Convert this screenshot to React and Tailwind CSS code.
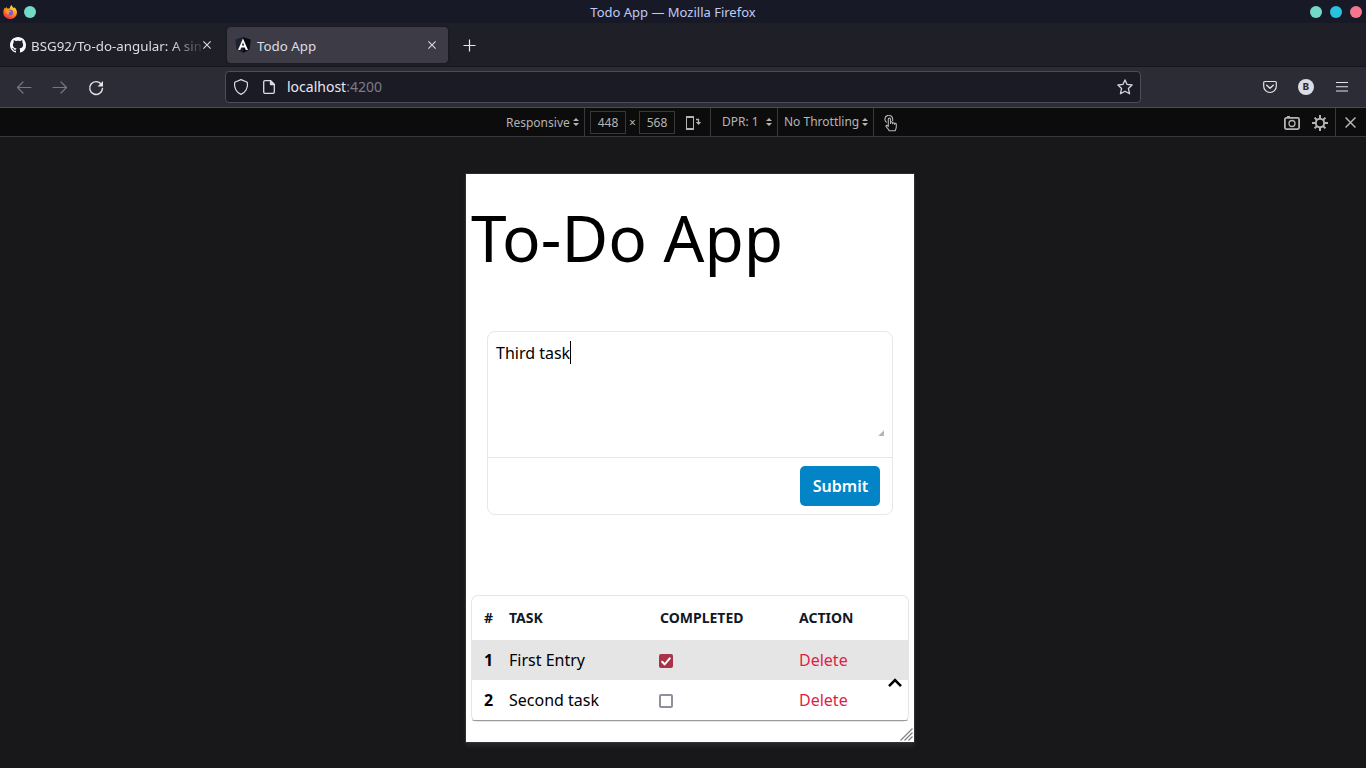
import React from "react";

const SANS = "font-['Noto_Sans',sans-serif]";

function Firefox() {
  return (
    <svg className="h-[14px] w-[14px]" viewBox="0 0 14 14">
      <defs>
        <linearGradient id="fx" x1="0.8" y1="0" x2="0.3" y2="1">
          <stop offset="0" stopColor="#fff34a" />
          <stop offset="0.4" stopColor="#ffa51e" />
          <stop offset="0.75" stopColor="#ff5a28" />
          <stop offset="1" stopColor="#ea2b55" />
        </linearGradient>
      </defs>
      <path
        d="M8.8 0c.2 1.700 1.200 2.300 2 3.200L11.600 2.300C13 3.800 14 5.500 14 7.500A6.700 6.500 0 0 1 7.100 14C3.200 14 .3 11.300.3 7.600.3 5.400 1 3.900 2 2.600l.3 1.100L3.500 2l.7 1.500 2.500.1C7 2 7.500.8 8.800 0Z"
        fill="url(#fx)"
      />
      <circle cx="7.200" cy="7.600" r="2.900" fill="#8057d6" />
      <path d="M3 5.500c1-.9 2.500-.6 3.600.3l1.300.3c-.2.900-1.500 1.100-2 1.600-.5.600-.2 1.300.5 1.700C4.500 10 2.700 8 3 5.500Z" fill="#ff9a20" />
    </svg>
  );
}

function Github() {
  return (
    <svg className="h-4 w-4" viewBox="0 0 16 16" fill="#fbfbfe">
      <path d="M8 0C3.580 0 0 3.580 0 8c0 3.540 2.290 6.530 5.470 7.590.4.070.55-.17.55-.38 0-.19-.01-.82-.01-1.490-2.010.37-2.530-.49-2.690-.94-.09-.23-.48-.94-.82-1.130-.28-.15-.68-.52-.01-.53.63-.01 1.080.58 1.230.82.72 1.210 1.870.87 2.330.66.070-.52.28-.87.51-1.070-1.780-.2-3.640-.89-3.640-3.950 0-.87.31-1.590.82-2.150-.08-.2-.36-1.020.08-2.120 0 0 .67-.21 2.200.82.64-.18 1.320-.27 2-.27s1.360.09 2 .27c1.530-1.040 2.200-.82 2.200-.82.44 1.100.16 1.920.08 2.120.51.56.82 1.270.82 2.150 0 3.070-1.870 3.750-3.650 3.950.29.25.54.73.54 1.480 0 1.070-.01 1.930-.01 2.200 0 .21.15.46.55.38A8.010 8.010 0 0 0 16 8c0-4.420-3.580-8-8-8Z" />
    </svg>
  );
}

function Angular() {
  return (
    <svg className="h-4 w-4" viewBox="0 0 16 16">
      <path d="M8 0 .3 2.600l1.200 10L8 16Z" fill="#1d2230" />
      <path d="m8 0 7.700 2.600-1.200 10L8 16Z" fill="#080b14" />
      <path fillRule="evenodd" d="M8 1.600 3 12.900h2.200l1-2.400h3.600l1 2.400H13Zm0 4 1.200 2.900H6.800Z" fill="#fff" />
    </svg>
  );
}

function Cross({ className, size = 8, width = 1.1 }) {
  return (
    <svg className={className} width={size} height={size} viewBox="0 0 8 8" fill="none" stroke="currentColor" strokeWidth={width}>
      <path d="m.4.4 7.200 7.200M7.600.4.400 7.600" />
    </svg>
  );
}

function Arrow({ className }) {
  return (
    <svg className={className} width="16" height="14" viewBox="0 0 16 14" fill="none" stroke="#777681" strokeWidth="1.200" strokeLinecap="round" strokeLinejoin="round">
      <path d="M1.500 7.500H15M7 2 1.500 7.500 7 13" />
    </svg>
  );
}

function Sorter({ className }) {
  return (
    <svg className={className} width="6" height="8" viewBox="0 0 6 8" fill="#b4b4b6">
      <path d="M0 3 3 0l3 3ZM0 5h6L3 8Z" />
    </svg>
  );
}

function TabBar() {
  return (
    <div className="flex h-[44px] items-center border-b border-[#16161f] bg-[#1f1f28] text-[#dcdce4]">
      <div className="flex h-9 w-[221px] items-center pl-[10px] pr-[9px]">
        <Github />
        <div className="ml-[5px] mt-[2px] w-[170px] overflow-hidden whitespace-nowrap text-[13.333px] leading-5 [mask-image:linear-gradient(to_right,black_140px,transparent_174px)]">
          BSG92/To-do-angular: A simple
        </div>
        <Cross className="ml-[2px] shrink-0" />
      </div>
      <div className="ml-[6px] flex h-9 w-[221px] items-center rounded-[4px] bg-[#3d3c46] pl-2 pr-3 shadow-[0_0_3px_rgba(0,0,0,0.4)]">
        <Angular />
        <span className="ml-[6px] mt-[2px] flex-1 text-[13.333px] leading-5">Todo App</span>
        <Cross />
      </div>
      <svg className="ml-[15px] mt-px" width="13" height="13" viewBox="0 0 13 13" stroke="#e6e6ee" strokeWidth="1.200">
        <path d="M6.500.5v12M.5 6.500h12" />
      </svg>
    </div>
  );
}

function NavBar() {
  return (
    <div className="flex h-[41px] items-center border-b border-[#4b4b55] bg-[#2c2c36]">
      <Arrow className="ml-4" />
      <Arrow className="ml-5 -scale-x-100" />
      <svg className="ml-5 mt-px" width="16" height="16" viewBox="0 0 16 16" fill="none">
        <path d="M13.400 4.400A6.400 6.400 0 1 0 14.500 8.400" stroke="#e2e2ea" strokeWidth="1.400" strokeLinecap="round" />
        <path d="M15 1v5.500H9.500Z" fill="#e2e2ea" />
      </svg>
      <div className="ml-[121px] flex h-8 w-[916px] items-center rounded-[4px] border border-[#4d4d58] bg-[#1b1b26]">
        <svg className="ml-[7px]" width="16" height="18" viewBox="0 0 16 18" fill="none" stroke="#dcdce4" strokeWidth="1.200" strokeLinejoin="round">
          <path d="M8 1.600 14.300 4.200C15.400 10 12.400 14.600 8 16.400 3.600 14.600.6 10 1.700 4.200Z" />
        </svg>
        <svg className="ml-[14px]" width="12" height="14" viewBox="0 0 12 14" fill="none" stroke="#dcdce4" strokeWidth="1.300" strokeLinejoin="round">
          <path d="M2 .7h5.500l3.800 3.800V12a1.300 1.300 0 0 1-1.300 1.300H2A1.300 1.300 0 0 1 .7 12V2A1.300 1.300 0 0 1 2 .7Z" />
          <path d="M7.500.7v3.800h3.800Z" fill="#dcdce4" />
        </svg>
        <span className="ml-3 flex-1 text-[14px] leading-5 text-[#e8e8f0]">
          localhost<span className="text-[#7c7b86]">:4200</span>
        </span>
        <svg className="mr-[7px]" width="16" height="16" viewBox="0 0 16 16" fill="none" stroke="#d6d6df" strokeWidth="1.300" strokeLinejoin="round">
          <path d="m8 .9 2.100 4.500 5 .6-3.700 3.400 1.200 5.400L8 12.300l-4.600 2.500 1.200-5.400L.9 6l5-.6Z" />
        </svg>
      </div>
      <svg className="ml-[122px]" width="14" height="14" viewBox="0 0 14 14" fill="none" stroke="#e2e2ea" strokeWidth="1.200" strokeLinecap="round" strokeLinejoin="round">
        <path d="M1.800 1.500h10.400a1.100 1.100 0 0 1 1.100 1.100v3.600a6.300 6.300 0 0 1-12.600 0V2.600a1.100 1.100 0 0 1 1.100-1.100Z" />
        <path d="M3.700 5.300 7 8.300l3.300-3" strokeWidth="1.400" />
      </svg>
      <div className="ml-[21px] flex h-4 w-4 items-center justify-center rounded-full bg-[#dcdce6] font-['Inter',sans-serif] text-[9.500px] font-extrabold leading-none text-[#2c2c36]">
        B
      </div>
      <svg className="ml-[22px]" width="12" height="10" viewBox="0 0 12 10" fill="#e2e2ea">
        <path d="M0 0h12v1.100H0zM0 4.200h12v1.100H0zM0 8.400h12v1.100H0z" />
      </svg>
    </div>
  );
}

function DeviceBar() {
  return (
    <div className="flex h-[29px] items-center border-b border-[#38383d] bg-[#0c0c0d] text-[12px] leading-4 text-[#b4b4b6]">
      <div className="flex h-full w-[585px] items-center border-r border-[#38383d] pl-[506px]">
        <span className="w-[67px] whitespace-nowrap pt-[2px]">Responsive</span>
        <Sorter />
      </div>
      <div className="flex h-full w-[126px] items-center border-r border-[#38383d] pl-[5px]">
        <span className="flex h-[23px] w-9 items-center justify-center border border-[#38383d] pt-[2px]">448</span>
        <span className="w-[13px] pt-[2px] text-center">×</span>
        <span className="flex h-[23px] w-9 items-center justify-center border border-[#38383d] pt-[2px]">568</span>
        <svg className="ml-[11px] mt-px" width="16" height="14" viewBox="0 0 16 14" fill="none" stroke="#b4b4b6">
          <path d="M0 1h8M0 13h8" strokeWidth="2" />
          <path d="M.5 0v14M7.500 0v14" strokeWidth="1" />
          <path d="M10 3.500h2.500V7" strokeWidth="1.300" />
          <path d="M9.800 6h5.400L12.500 9Z" fill="#b4b4b6" stroke="none" />
        </svg>
      </div>
      <div className="flex h-full w-[67px] items-center border-r border-[#38383d] pl-[11px]">
        <span className="w-[44px] whitespace-nowrap">DPR: 1</span>
        <Sorter />
      </div>
      <div className="flex h-full w-[96px] items-center border-r border-[#38383d] pl-[6px]">
        <span className="w-[78px] whitespace-nowrap">No Throttling</span>
        <Sorter />
      </div>
      <svg className="ml-[10px] mt-[2px]" width="14" height="17" viewBox="0 0 14 17" fill="none" stroke="#b4b4b6" strokeWidth="1.100" strokeLinecap="round" strokeLinejoin="round">
        <path d="M2.300 7.200A3.900 3.900 0 1 1 8.700 4.500v1" />
        <path d="M4.300 11.500V4.200a1.100 1.100 0 0 1 2.200 0v4.300M6.500 8.500V7.800a1 1 0 0 1 2 0v1M8.500 8.800a1 1 0 0 1 2 0v.5M10.500 9.300a.9.900 0 0 1 1.800 0v2.500c0 2-.8 2.200-1 4H5.200C4.900 14.300 2.500 12.800 2 11.300c-.2-1.200 1.200-1.400 2.300.2" />
      </svg>
      <svg className="ml-auto mt-[2px]" width="16" height="14" viewBox="0 0 16 14" fill="none" stroke="#b4b4b6">
        <rect x=".9" y="1.900" width="14.200" height="11.200" rx="1.500" strokeWidth="1.800" />
        <path d="M3 .7h3" strokeWidth="1.400" />
        <circle cx="8" cy="7.500" r="3" strokeWidth="1.300" />
      </svg>
      <svg className="ml-3 mr-[7px] mt-[2px]" width="16" height="16" viewBox="0 0 16 16" fill="none" stroke="#b4b4b6">
        <circle cx="8" cy="8" r="4.200" strokeWidth="2" />
        <path d="M8 0v4M8 12v4M0 8h4M12 8h4M2.600 2.600l2.600 2.600M10.800 10.800l2.600 2.600M2.600 13.400l2.600-2.600M10.800 5.200l2.600-2.600" strokeWidth="2" />
      </svg>
      <div className="flex h-full w-[31px] items-center justify-center border-l border-[#38383d] pr-px">
        <Cross size={11} width={1.1} className="mt-px" />
      </div>
    </div>
  );
}

function TaskRow({ id, name, done }) {
  return (
    <div className={`grid h-10 grid-cols-[37px_150px_140px_1fr] items-center text-[16px] leading-6 ${done ? "bg-[#e5e5e5]" : ""}`}>
      <span className="pl-3 font-bold">{id}</span>
      <span>{name}</span>
      {done ? (
        <span className="mt-[2px] flex h-[14px] w-[14px] items-center justify-center rounded-[2px] bg-[#ab3149]">
          <svg width="10" height="9" viewBox="0 0 10 9" fill="none" stroke="#fff" strokeWidth="2" strokeLinecap="round" strokeLinejoin="round">
            <path d="m1.200 4.800 2.400 2.600 5.200-6" />
          </svg>
        </span>
      ) : (
        <span className="mt-[2px] h-[14px] w-[14px] rounded-[2px] border-2 border-[#8f8f9d] bg-white" />
      )}
      <span className="text-[#e11d48]">Delete</span>
    </div>
  );
}

function TodoPage() {
  return (
    <div className="relative h-[568px] w-[448px] bg-white px-[6px] pt-[18px] text-black shadow-[0_0_0_1px_rgba(60,60,64,0.55),0_4px_4px_rgba(60,60,64,0.5)]">
      <h1 className="-ml-px h-[92px] whitespace-nowrap text-[64px] font-normal leading-[92px]">To-Do App</h1>
      <div className="mx-[15px] mt-[47px] h-[184px] rounded-lg border border-[#e5e7eb]">
        <div className="relative h-[126px] border-b border-[#e5e7eb] px-2 pt-[9px] text-[16px] leading-6">
          Third task
          <span className="inline-block h-[23px] w-px bg-black align-top" />
          <svg className="absolute bottom-[21px] right-2" width="6" height="6" viewBox="0 0 6 6">
            <path d="M0 6 6 0v6Z" fill="#c4c4c4" />
            <path d="m2 6 4-4M4.500 6 6 4.500" stroke="#999" strokeWidth=".8" />
          </svg>
        </div>
        <div className="flex justify-end pr-3 pt-2">
          <button className="h-10 w-20 rounded-[5px] bg-[#0284c7] pl-px text-[16px] font-semibold leading-6 text-white">Submit</button>
        </div>
      </div>
      <div className="mt-[81px] rounded-[6px] shadow-[0_0_0_1px_rgba(0,0,0,0.1)]">
        <div className="rounded-b-[2px] border-b border-[#9b9b9b]">
          <div className="grid h-[44px] grid-cols-[37px_150px_140px_1fr] items-center text-[14px] font-bold leading-5 text-[#111827]">
            <span className="pl-3">#</span>
            <span>TASK</span>
            <span className="pl-px">COMPLETED</span>
            <span>ACTION</span>
          </div>
          <TaskRow id={1} name="First Entry" done />
          <TaskRow id={2} name="Second task" />
        </div>
      </div>
      <svg className="absolute right-3 top-[504px]" width="14" height="10" viewBox="0 0 14 10" fill="none" stroke="#000" strokeWidth="2.600">
        <path d="M1 8.200 7 2.200l6 6" />
      </svg>
      <svg className="absolute bottom-px right-px" width="13" height="13" viewBox="0 0 13 13" fill="none" stroke="#808080" strokeWidth="1.200">
        <path d="M.5 12.500l12-12M4.500 12.500l8-8M8.500 12.500l4-4" />
      </svg>
    </div>
  );
}

export default function App() {
  return (
    <div className={`flex h-[768px] w-[1366px] flex-col overflow-hidden bg-[#18181a] ${SANS}`}>
      <div className="grid h-[23px] grid-cols-[1fr_auto_1fr] items-center bg-[#171a26] text-[13px] leading-5 text-[#c0caf5]">
        <div className="flex items-center gap-[7px] pl-[3px]">
          <Firefox />
          <span className="mt-px h-3 w-3 rounded-full bg-[#73daca]" />
        </div>
        <span className="pr-[20px]">Todo App — Mozilla Firefox</span>
        <div className="flex justify-end gap-2 pr-1 pt-px">
          <span className="h-3 w-3 rounded-full bg-[#73daca]" />
          <span className="h-3 w-3 rounded-full bg-[#2ac3de]" />
          <span className="h-3 w-3 rounded-full bg-[#f7768e]" />
        </div>
      </div>
      <TabBar />
      <NavBar />
      <DeviceBar />
      <div className="flex flex-1 justify-center pl-[14px] pt-[37px]">
        <TodoPage />
      </div>
    </div>
  );
}
